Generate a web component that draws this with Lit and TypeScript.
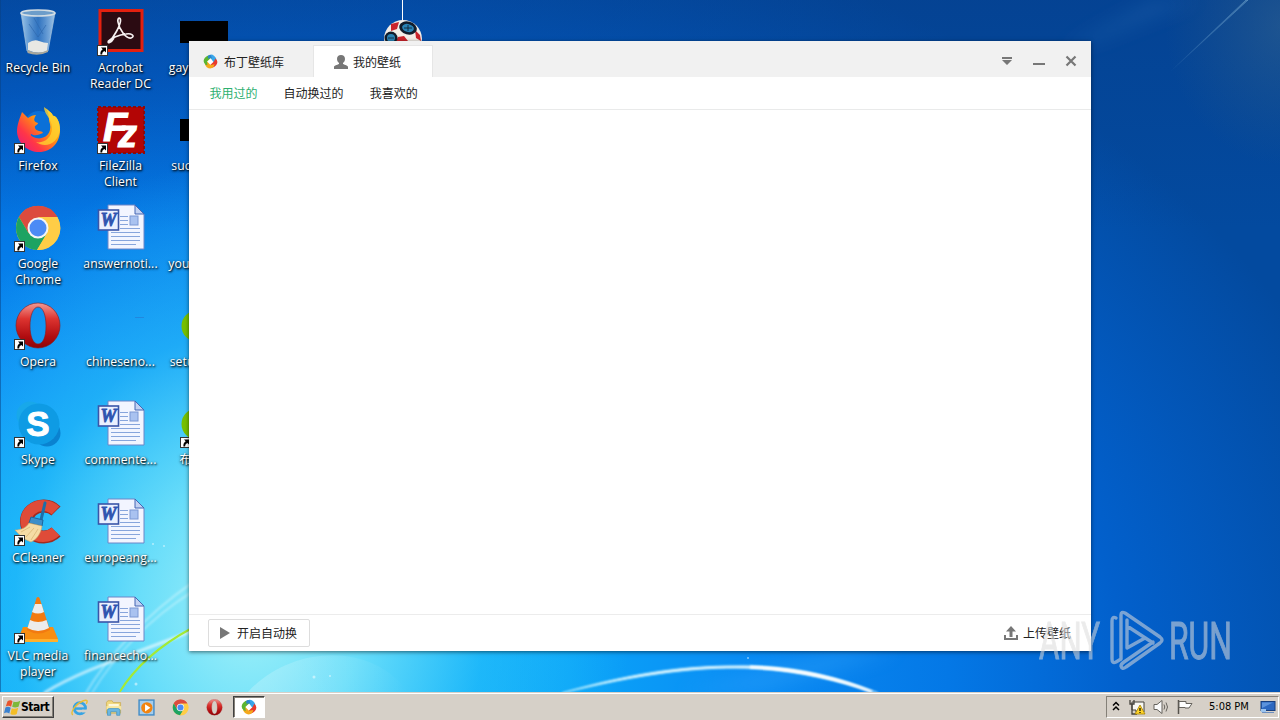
import { LitElement, html, svg, css } from 'lit';
import { customElement, property, state } from 'lit/decorators.js';
import { classMap } from 'lit/directives/class-map.js';

const wordDoc = svg`<g transform="translate(0 -1)">
  <path d="M11 2H38L47 11V46H11Z" fill="#f2f5ff" stroke="#6c86c8" />
  <path d="M38 2V11H47Z" fill="#c3d2f2" stroke="#4467b4" />
  <path d="M23 13.500H31M23 17.500H31M23 21.500H31M23 25.500H43M14 29.500H43M14 33.500H43M14 37.500H43M14 41.500H39" stroke="#87a5dc" />
  <rect x="33" y="13" width="8" height="9" fill="#a9c2f0" stroke="#7b98d4" />
  <rect x="1.500" y="7" width="20" height="20" fill="#eaf0ff" stroke="#3a56a8" stroke-width="1.600" />
  <text x="11.500" y="23" font-family="Liberation Serif, serif" font-size="18" font-weight="bold" font-style="italic"
    text-anchor="middle" fill="#2f55b0" stroke="#2f55b0" stroke-width=".8">W</text></g>`;

const chrome = svg`<g transform="translate(0 -1)">
  <circle cx="24" cy="25" r="22" fill="#fc4" />
  <path d="M24 25L5 14A22 22 0 0 1 43 14Z" fill="#dc4b3e" />
  <path d="M24 14H43.5A22 22 0 0 0 5 14L14.500 30Z" fill="#dc4b3e" />
  <path d="M5 14A22 22 0 0 0 23 47L33 30L24 34L14.500 30Z" fill="#1da362" />
  <path d="M33.500 30L23 47A22 22 0 0 0 43.500 14H24Z" fill="#ffcd46" />
  <circle cx="24" cy="25" r="10.500" fill="#f5f5f5" />
  <circle cx="24" cy="25" r="8.500" fill="#4c8bf5" /></g>`;

const opera = svg`
  <defs><linearGradient id="op" x2="0" y2="1">
    <stop stop-color="#f29a94" /><stop offset=".35" stop-color="#dd3430" />
    <stop offset=".75" stop-color="#b00c10" /><stop offset="1" stop-color="#8e0508" />
  </linearGradient></defs>
  <path transform="translate(0 -1)" fill-rule="evenodd" fill="url(#op)" stroke="#8d1518" stroke-width=".6"
    d="M24 2A22 22.500 0 1 0 24 47A22 22.500 0 1 0 24 2ZM24 6C29 6 32 14 32 25S29 43 24 43S16 35 16 25S19 6 24 6Z" />`;

const pudding = svg`
  <circle cx="24" cy="24" r="15" fill="#fff" />
  <path d="M15 8Q24 -3 36 6Q45 13 43 24L34 26L24 13L13 16Z" fill="#3aa6ea" />
  <path d="M40 14Q51 24 42 36Q36 43 28 44L23 35L35 24Z" fill="#e93a2c" />
  <path d="M34 41Q24 51 12 42Q8 38 6 33L13 24L24 35L37 33Z" fill="#f5a91c" />
  <path d="M8 34Q-3 24 6 12Q12 4 22 4L25 13L13 24L14 36Z" fill="#5cb531" />
  <path d="M15 6Q19 3 25 3L29 14L24 13L17 15Z" fill="#2b84d0" />`;

const icons: Record<string, unknown> = {
  bin: svg`
    <defs><linearGradient id="bin"><stop stop-color="#b8dcf5" stop-opacity=".85" />
      <stop offset=".5" stop-color="#5f9bd8" stop-opacity=".5" />
      <stop offset="1" stop-color="#c8e4f8" stop-opacity=".8" /></linearGradient></defs>
    <path d="M7 5L13 43Q23 48 34 43L41 5Z" fill="url(#bin)" stroke="#a8c4dc" stroke-width=".7" />
    <path d="M14 35Q20 31 25 33T34 35L33 43Q24 47 14 42Z" fill="#e8e8e4" />
    <path d="M13.500 42Q24 47 34 42V44Q24 49 13.500 45Z" fill="#a9a79b" />
    <path d="M15 16L24 29L32 17M20 10L29 26" stroke="#2e67ac" fill="none" opacity=".65" />
    <ellipse cx="24" cy="5" rx="17" ry="3" fill="#6d9dca" stroke="#d4dde3" stroke-width="1.600" />`,
  acrobat: svg`
    <rect x="3" y="2.500" width="42" height="40" fill="#2b0b12" stroke="#e3200f" stroke-width="3" />
    <path d="M12 34C17 29 23 18 23.500 13C24 9 20 9 21 14C22 21 29 31 34 30C39 28 34 25 29 26C22 27 14 30 11.500 33C10 36 14 35 17 30"
      fill="none" stroke="#f6f0f0" stroke-width="1.700" />`,
  firefox: svg`
    <defs><linearGradient id="ff" x1="1" x2="0" y2="1">
      <stop stop-color="#fff44f" /><stop offset=".4" stop-color="#ff980e" />
      <stop offset=".7" stop-color="#ff3647" /><stop offset="1" stop-color="#e31587" /></linearGradient></defs>
    <circle cx="25" cy="20" r="15" fill="#0a70d8" />
    <path d="M30 1C36 5 34 12 36 18C38 28 30 34 22 32C18 31 16 29 17 28C22 31 25 28 29 27C28 24 22 26 21 22C20 19 24 19 24 17C20 16 19 14 22 9C17 9 15 12 14 12L8 6C6 12 3 18 3 26C4 38 14 46 25 46C38 46 46 36 46 24C46 14 41 9 39 10C38 6 33 4 30 1Z" fill="url(#ff)" />
    <path d="M30 1C30 9 38 12 38 22C38 32 29 38 22 36C32 43 44 37 46 24C46 14 41 9 39 10C38 6 33 4 30 1Z" fill="#ffd22e" opacity=".8" />`,
  filezilla: svg`
    <rect x="1" y="1" width="46" height="46" fill="#b30505" stroke="#8e0a0a" stroke-width="2" stroke-dasharray="3 2" />
    <text x="6" y="35" fill="#fff" stroke="#fff" font-family="Liberation Sans, sans-serif" font-size="40"
      font-weight="bold" font-style="italic">F<tspan x="21" y="41" font-size="38">z</tspan></text>`,
  chrome,
  word: wordDoc,
  opera,
  skype: svg`
    <circle cx="16" cy="15" r="13.500" fill="#18a8ea" /><circle cx="33" cy="33" r="13.500" fill="#0a82d0" />
    <circle cx="25" cy="24" r="20.500" fill="#0e9be4" />
    <text x="24" y="36" font-family="Liberation Sans, sans-serif" font-size="35" font-weight="bold" text-anchor="middle"
      fill="#fff" stroke="#fff">S</text>`,
  ccleaner: svg`
    <path d="M42 13A17 15.500 0 1 0 42 34" fill="none" stroke="#a32a1e" stroke-width="13" />
    <path d="M41.500 12.500A17 15.500 0 1 0 41.500 33.500" fill="none" stroke="#df4b38" stroke-width="11" />
    <path d="M31 5L27 22" stroke="#1d6ea8" stroke-width="3" stroke-linecap="round" />
    <path d="M17 19L29 22L28 28L15 25Z" fill="#3c8fca" stroke="#1d659c" />
    <path d="M15 25L28 28C27 36 22 42 17 44C11 42 5 37 1 32C7 32 12 30 15 25Z" fill="#f5dca5" stroke="#cca869" stroke-width=".6" />
    <path d="M16 29L7 34M20 30L12 39M24 31L17 42" stroke="#d9b676" stroke-width=".8" />`,
  vlc: svg`
    <path d="M9 31H39L44 43Q44 46 42 46H6Q4 46 4 43Z" fill="#f78e12" />
    <path d="M4 43H44V46H4Z" fill="#ffb02c" />
    <path d="M22.500 2Q24 0 25.500 2L36 34Q24 41 13 34Z" fill="#f27a10" />
    <path d="M21 8H27.500L30 16Q24 19 18 16Z M16 24Q24 28 32.500 24L35 32Q24 38 13.500 32Z" fill="#ececec" />`,
  black: svg`<rect y="13" width="48" height="22" />`,
  green: svg`<circle cx="17" cy="24" r="15.500" fill="#76c002" />`,
  blank: svg`<path d="M38 15.500H47" stroke="#2c63c0" opacity=".4" />`,
  none: '',
  arrow: svg`
    <rect x=".5" y=".5" width="10" height="10" fill="#fff" stroke="#333" />
    <path d="M4 2.500H9V7.500L7.400 6C5.500 7 5.200 8 5.200 9.500H3.400C3.200 7 4 5.300 5.700 4.200Z" fill="#000" />`,
  pudding,
  ie: svg`
    <circle cx="25" cy="26" r="16" fill="none" stroke="#36a4e4" stroke-width="8" />
    <path d="M11 27H41" stroke="#36a4e4" stroke-width="7" />
    <path d="M31 30H46V38H31Z" fill="#d4d0c8" />
    <path d="M5 45C-4 36 16 12 35 5C46 1 48 6 43 14" fill="none" stroke="#e9bd35" stroke-width="4" />`,
  folder: svg`
    <path d="M4 10L8 5H20L23 10H44V40H4Z" fill="#f0d77d" stroke="#c9a94c" stroke-width="2" />
    <rect x="10" y="14" width="29" height="10" fill="#fdf7dc" /><path d="M4 20H46V30H4Z" fill="#f8e7a0" />
    <path d="M7 46V32Q7 27 12 27H37Q42 27 42 32V46H33V36H16V46Z" fill="#6ab7e2" stroke="#4191c0" stroke-width="2" />`,
  media: svg`
    <rect x="3" y="3" width="42" height="42" fill="#a6cdec" stroke="#438cc7" stroke-width="4" />
    <circle cx="25" cy="25" r="16" fill="#f28410" /><path d="M20 15L35 25L20 35Z" fill="#fff" />`,
  windows: svg`
    <path d="M10 6Q18 1 24 6L20 22Q13 17 5 21Z" fill="#e8542c" />
    <path d="M27 7Q35 11 46 5L41 22Q31 26 23 22Z" fill="#7db83a" />
    <path d="M4 24Q12 20 19 25L15 41Q8 36 0 40Z" fill="#3b82d0" />
    <path d="M22 26Q30 30 40 25L36 42Q27 47 18 42Z" fill="#f3bd25" />`,
};

const icon = (name: string, size = 48, box = 48) => html`
  <svg class="icon" width=${size} height=${size} viewBox="0 0 ${box} ${box}">${icons[name]}</svg>`;

@customElement('desktop-icon')
export class DesktopIcon extends LitElement {
  @property() name = 'none';
  @property() label = '';
  @property({ type: Boolean }) shortcut = false;

  static styles = css`
    :host {
      display: flex;
      flex-direction: column;
      align-items: center;
      gap: 4px;
      height: 98px;
      font: 12.2px/16px 'Open Sans', 'Noto Sans CJK SC', sans-serif;
      color: #fff;
      text-align: center;
    }
    svg {
      display: block;
    }
    .picture {
      position: relative;
      width: 48px;
      height: 48px;
    }
    .arrow {
      position: absolute;
      left: 0;
      bottom: 0;
    }
    .label {
      letter-spacing: 0.1px;
      white-space: pre;
      text-shadow: 1px 1px 2px #000, 0 1px 3px rgba(0, 0, 0, 0.7);
    }
  `;

  render() {
    return html`
      <div class="picture">
        ${icon(this.name)}
        ${this.shortcut ? html`<div class="arrow">${icon('arrow', 11, 11)}</div>` : ''}
      </div>
      <div class="label">${this.label}</div>
    `;
  }
}

@customElement('wallpaper-window')
export class WallpaperWindow extends LitElement {
  @state() section = 0;

  sections = ['我用过的', '自动换过的', '我喜欢的'];

  static styles = css`
    :host {
      display: flex;
      flex-direction: column;
      background: #fff;
      color: #222;
      font: 12px/16px 'Noto Sans CJK SC', sans-serif;
      box-shadow: 0 1px 4px rgba(0, 0, 0, 0.55);
    }
    svg {
      display: block;
      flex: none;
    }
    .title {
      display: flex;
      align-items: flex-end;
      height: 36px;
      background: #f1f1f1;
    }
    .tab {
      box-sizing: border-box;
      display: flex;
      align-items: center;
      gap: 6px;
      width: 124px;
      height: 32px;
      padding: 1px 0 0 14px;
    }
    .tab.active {
      gap: 5px;
      width: 120px;
      padding: 0 0 0 20px;
      background: #fff;
      border: 1px solid #e6e6e6;
      border-bottom: 0;
    }
    .controls {
      display: flex;
      gap: 20px;
      margin: 0 14px 10px auto;
    }
    nav {
      box-sizing: border-box;
      display: flex;
      align-items: center;
      gap: 26px;
      height: 33px;
      padding: 0 0 0 20.6px;
      border-bottom: 1px solid #e9eaea;
    }
    .section {
      cursor: pointer;
    }
    .section.active {
      color: #2db06f;
    }
    main {
      flex: 1;
    }
    footer {
      display: flex;
      align-items: center;
      justify-content: space-between;
      height: 36px;
      padding: 0 20px 0 19px;
      border-top: 1px solid #ececec;
    }
    .auto {
      box-sizing: border-box;
      display: flex;
      align-items: center;
      gap: 7px;
      width: 102px;
      height: 28px;
      padding-left: 11px;
      border: 1px solid #ddd;
      border-radius: 2px;
    }
    .upload {
      display: flex;
      align-items: center;
      gap: 5px;
    }
  `;

  render() {
    return html`
      <div class="title">
        <div class="tab">${icon('pudding', 15)}<span>布丁壁纸库</span></div>
        <div class="tab active">
          <svg width="14" height="14" viewBox="0 0 14 14">
            <path fill="#777" d="M7 0C9.500 0 11 1.500 11 4C11 6 10 7 9 8V9C11 10 14 10.500 14 12V14H0V12C0 10.500 3 10 5 9V8C4 7 3 6 3 4C3 1.500 4.500 0 7 0Z" />
          </svg>
          <span>我的壁纸</span>
        </div>
        <div class="controls">
          <svg width="12" height="12" viewBox="0 0 12 12"><path fill="#777" d="M1 2H11V4H1ZM1 5H11L6 10Z" /></svg>
          <svg width="12" height="12" viewBox="0 0 12 12"><path fill="#777" d="M0 8H12V10H0Z" /></svg>
          <svg width="12" height="12" viewBox="0 0 12 12">
            <path stroke="#777" stroke-width="2.200" d="M1.500 1.500L10.500 10.500M10.500 1.500L1.500 10.500" />
          </svg>
        </div>
      </div>
      <nav>
        ${this.sections.map((name, i) => html`
          <span class=${classMap({ section: true, active: i === this.section })} @click=${() => { this.section = i; }}>${name}</span>
        `)}
      </nav>
      <main></main>
      <footer>
        <div class="auto">
          <svg width="10" height="12" viewBox="0 0 10 12"><path fill="#777" d="M0 0L10 6L0 12Z" /></svg>
          <span>开启自动换</span>
        </div>
        <div class="upload">
          <svg width="14" height="14" viewBox="0 0 14 14">
            <path fill="#777" d="M7 0L12 5.500H8.500V11H5.500V5.500H2ZM0 9H2V12H12V9H14V14H0Z" />
          </svg>
          <span>上传壁纸</span>
        </div>
      </footer>
    `;
  }
}

@customElement('task-bar')
export class TaskBar extends LitElement {
  static styles = css`
    :host {
      box-sizing: border-box;
      display: flex;
      align-items: center;
      height: 28px;
      padding: 1px 1px 0 2px;
      background: #d6d0c8;
      border-top: 1px solid #d6d0c8;
      box-shadow: inset 0 1px #fff;
      font: 11px/14px 'DejaVu Sans Condensed', 'DejaVu Sans', sans-serif;
      font-stretch: condensed;
      color: #000;
    }
    svg {
      display: block;
      flex: none;
    }
    .start {
      box-sizing: border-box;
      display: flex;
      align-items: center;
      width: 52px;
      height: 22px;
      padding-left: 1px;
      border: 1px solid;
      border-color: #fff #404040 #404040 #fff;
      box-shadow: inset -1px -1px #848078;
      font-size: 12px;
      font-weight: bold;
      letter-spacing: -0.5px;
    }
    .quick {
      display: flex;
      gap: 16.7px;
      padding: 0 10px 0 17px;
    }
    .running {
      box-sizing: border-box;
      display: grid;
      place-items: center;
      width: 32px;
      height: 22px;
      background: #fff;
      border: 1px solid;
      border-color: #404040 #fff #fff #404040;
      box-shadow: inset 1px 1px #848078;
    }
    .tray {
      box-sizing: border-box;
      display: flex;
      align-items: center;
      width: 173px;
      height: 22px;
      margin-left: auto;
      padding-left: 5px;
      border: 1px solid;
      border-color: #848078 #fff #fff #848078;
    }
    .time {
      width: 43px;
      margin: 0 8px 0 7px;
      white-space: nowrap;
    }
  `;

  render() {
    return html`
      <div class="start">${icon('windows', 17)}<span>Start</span></div>
      <div class="quick">
        ${['ie', 'folder', 'media', 'chrome', 'opera'].map(name => icon(name, 17))}
      </div>
      <div class="running">${icon('pudding', 16)}</div>
      <div class="tray">
        <svg width="90" height="18" viewBox="0 0 90 18">
          <path d="M1 7.500L4 4.500L7 7.500M1 12L4 9L7 12" fill="none" stroke="#000" stroke-width="1.500" />
          <path d="M20 4H32V14H24V12H20Z" fill="#f8f8f4" stroke="#44423c" />
          <path d="M18 2V6H22V2M20 6V16H25" fill="none" stroke="#44423c" stroke-width="1.300" />
          <path d="M28 7L33 16H23Z" fill="#ffd42a" stroke="#a68000" stroke-width=".8" />
          <path d="M28 10V13M28 14V15" stroke="#000" stroke-width="1.200" />
          <path d="M42 6.500H45L50 2.500V15.500L45 11.500H42Z" fill="#fafafa" stroke="#66635d" />
          <path d="M52 6.500Q53.500 9 52 11.500M54 4.500Q57 9 54 13.500" fill="none" stroke="#66635d" />
          <path d="M66.500 2V16" stroke="#55524c" stroke-width="1.500" />
          <path d="M67 3.500H74V5.500H80L77 10H73V9.500H67Z" fill="#fff" stroke="#66635d" />
        </svg>
        <span class="time">5:08 PM</span>
        <svg width="16" height="14" viewBox="0 0 16 14">
          <rect x="1" y="1.500" width="14" height="9" fill="#2c68c0" stroke="#173e7d" />
          <path d="M2 2.500H13L2 8Z" fill="#5c93dc" />
          <path d="M2 12.500H14" stroke="#6d8fc0" /><path d="M1 9H6V12H1Z" fill="#9cc4ee" />
        </svg>
      </div>
    `;
  }
}

interface Shortcut {
  name: string;
  label: string;
  shortcut?: boolean;
}

@customElement('app-root')
export class AppRoot extends LitElement {
  // filled column by column, seven to a column
  items: Shortcut[] = [
    { name: 'bin', label: 'Recycle Bin' },
    { name: 'firefox', label: 'Firefox', shortcut: true },
    { name: 'chrome', label: 'Google\nChrome', shortcut: true },
    { name: 'opera', label: 'Opera', shortcut: true },
    { name: 'skype', label: 'Skype', shortcut: true },
    { name: 'ccleaner', label: 'CCleaner', shortcut: true },
    { name: 'vlc', label: 'VLC media\nplayer', shortcut: true },
    { name: 'acrobat', label: 'Acrobat\nReader DC', shortcut: true },
    { name: 'filezilla', label: 'FileZilla\nClient', shortcut: true },
    { name: 'word', label: 'answernoti...' },
    { name: 'blank', label: 'chineseno...' },
    { name: 'word', label: 'commente...' },
    { name: 'word', label: 'europeang...' },
    { name: 'word', label: 'financecho...' },
    { name: 'black', label: 'gayblack.jpg' },
    { name: 'black', label: 'suchtell.jpg' },
    { name: 'none', label: 'youngnet.rtf' },
    { name: 'green', label: 'setup_1.exe' },
    { name: 'green', label: '布丁壁纸', shortcut: true },
  ];

  static styles = css`
    :host {
      position: relative;
      display: flex;
      flex-direction: column;
      width: 1280px;
      height: 720px;
      overflow: hidden;
      background:
        linear-gradient(rgba(6, 56, 130, 0.4), rgba(6, 70, 150, 0) 230px),
        radial-gradient(ellipse 380px 450px at 250px 610px, rgba(170, 245, 248, 0.95) 0, rgba(120, 230, 250, 0.85) 30%, rgba(50, 200, 250, 0.5) 62%, rgba(10, 150, 250, 0) 100%),
        radial-gradient(ellipse 1180px 820px at 240px 690px, #08b0fa 0, #0aa4f8 28%, #0a8cf4 43%, #0478e6 60%, #0260cc 75%, #034a9f 100%);
    }
    .wallpaper,
    .watermark {
      position: absolute;
      left: 0;
      top: 0;
      pointer-events: none;
    }
    .desktop {
      position: relative;
      flex: 1;
      display: grid;
      grid-template: repeat(7, 98px) / 76px 89px 78px;
      grid-auto-flow: column;
      padding-top: 8px;
      box-sizing: border-box;
      height: 692px;
    }
    wallpaper-window {
      position: absolute;
      left: 189px;
      top: 41px;
      width: 902px;
      height: 610px;
    }
    task-bar {
      position: relative;
      flex: none;
    }
  `;

  wallpaper() {
    return html`
      <svg class="wallpaper" width="1280" height="692" viewBox="0 0 1280 692">
        <defs>
          <filter id="soft" x="-20%" y="-20%" width="140%" height="140%"><feGaussianBlur stdDeviation="1.200" /></filter>
          <filter id="haze" x="-50%" y="-50%" width="200%" height="200%"><feGaussianBlur stdDeviation="9" /></filter>
          <linearGradient id="streak"><stop stop-color="#8bd" stop-opacity="0" /><stop offset="1" stop-color="#8bd" stop-opacity=".35" /></linearGradient>
          <linearGradient id="arc"><stop stop-color="#fff" stop-opacity=".22" /><stop offset="1" stop-color="#fff" stop-opacity="0" /></linearGradient>
          <radialGradient id="corner"><stop stop-color="#4f7488" stop-opacity=".35" /><stop offset="1" stop-color="#43657a" stop-opacity="0" /></radialGradient>
        </defs>
        <rect width="1" height="692" fill="#0a3f80" opacity=".5" />
        <ellipse cx="1285" cy="25" rx="120" ry="140" fill="url(#corner)" />
        <path d="M1170 72L1248 0L1246 0L1172 70Z" fill="url(#streak)" stroke="url(#streak)" />
        <path d="M1060 50L1150 0H1200L1100 40Z" fill="#3579bd" opacity=".22" filter="url(#haze)" />
        <path d="M248 692C290 646 370 640 408 692Z" fill="url(#arc)" />
        <path d="M680 692L840 651H900L760 692Z" fill="#49b2ff" opacity=".25" filter="url(#haze)" />
        <g fill="none" stroke="#fff" filter="url(#soft)">
          <path d="M44 693C85 668 135 654 192 631" stroke-width="3" opacity=".6" />
          <path d="M86 693C105 660 145 615 192 583" stroke-width="2" opacity=".4" />
          <path d="M92 693C115 655 150 618 192 592" stroke-width="1.500" opacity=".4" />
        </g>
        <path d="M119 693C133 670 155 648 192 628" fill="none" stroke="#a4ea34" stroke-width="2" />
        <path d="M562 693C640 671 690 666 735 666C790 665 830 675 878 693C830 679 790 668 735 668C690 668 640 674 562 693Z"
          fill="#fff" stroke="#c9f4ff" stroke-width="1" filter="url(#soft)" />
        <path d="M750 667Q820 670 872 692" fill="none" stroke="#fff" stroke-width="2.500" filter="url(#soft)" />
        <g fill="#fff" opacity=".5">
          <circle cx="153" cy="544" r="1" /><circle cx="164" cy="546" r="1" /><circle cx="136" cy="684" r="1.500" />
          <circle cx="314" cy="677" r="1.500" /><circle cx="330" cy="676" r="1" /><circle cx="748" cy="658" r="1" />
        </g>
        <path d="M402.500 0V22" stroke="#fff" />
        <circle cx="403" cy="39" r="19" fill="#f3eee8" />
        <path d="M391 24L399 22L397 29L391 31Z M398 37L404 36L408 41H396Z M415 30L420 35L421 41L416 38Z" fill="#c9232b" />
        <ellipse cx="408" cy="28" rx="9" ry="6.500" fill="#111d2c" transform="rotate(15 408 28)" />
        <ellipse cx="408" cy="28" rx="6" ry="4" fill="#2a83b5" transform="rotate(15 408 28)" />
        <ellipse cx="391" cy="38" rx="6.500" ry="6.500" fill="#111d2c" /><ellipse cx="391" cy="38" rx="4" ry="4" fill="#2a83b5" />
        <path d="M404 28H412M408 25V31M388 38H394" stroke="#0c1c2e" stroke-width=".8" />
      </svg>
    `;
  }

  watermark() {
    return html`
      <svg class="watermark" width="1280" height="692" viewBox="0 0 1280 692">
        <g opacity=".55" fill="#dcdcdc" stroke="#dcdcdc" font-family="Roboto, sans-serif" font-size="51">
          <text x="1039" y="659" textLength="61" lengthAdjust="spacingAndGlyphs">ANY</text>
          <text x="1169" y="659" textLength="63" lengthAdjust="spacingAndGlyphs">RUN</text>
          <path d="M1116 618Q1112 616 1112 621V659Q1112 664 1116 662L1121 659V615Q1121 611 1125 613L1160 637Q1164 640 1160 643L1126 667Q1122 670 1121 666Q1121 664 1124 662L1153 642M1127 626L1153 643M1127 620V648L1145 638"
            fill="none" stroke-width="3.400" stroke-linejoin="round" stroke-linecap="round" />
        </g>
      </svg>
    `;
  }

  render() {
    return html`
      ${this.wallpaper()}
      <div class="desktop">
        ${this.items.map(item => html`
          <desktop-icon .name=${item.name} .label=${item.label} .shortcut=${!!item.shortcut}></desktop-icon>
        `)}
      </div>
      <wallpaper-window></wallpaper-window>
      <task-bar></task-bar>
      ${this.watermark()}
    `;
  }
}
